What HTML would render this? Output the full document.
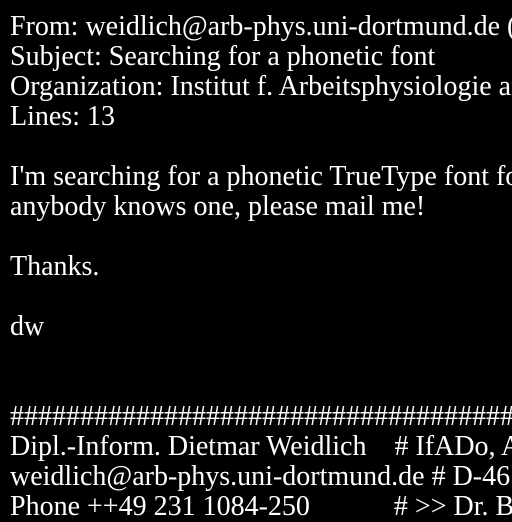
<!DOCTYPE html>
<html><head><meta charset="utf-8"><style>
html,body{margin:0;padding:0;background:#000;width:512px;height:512px;overflow:hidden}
pre{position:absolute;left:10px;top:12px;margin:0;font-family:"Liberation Serif",serif;font-size:28px;line-height:30px;color:#fff;white-space:pre}
</style></head><body><pre>From: weidlich@arb-phys.uni-dortmund.de (Dietmar Weidlich)
Subject: Searching for a phonetic font
Organization: Institut f. Arbeitsphysiologie an der Uni Dortmund
Lines: 13

I'm searching for a phonetic TrueType font for Windows. If
anybody knows one, please mail me!

Thanks.

dw


##################################################
Dipl.-Inform. Dietmar Weidlich    # IfADo, Ardeystr. 67
weidlich@arb-phys.uni-dortmund.de # D-46139 Dortmund
Phone ++49 231 1084-250            # &gt;&gt; Dr. B</pre></body></html>
